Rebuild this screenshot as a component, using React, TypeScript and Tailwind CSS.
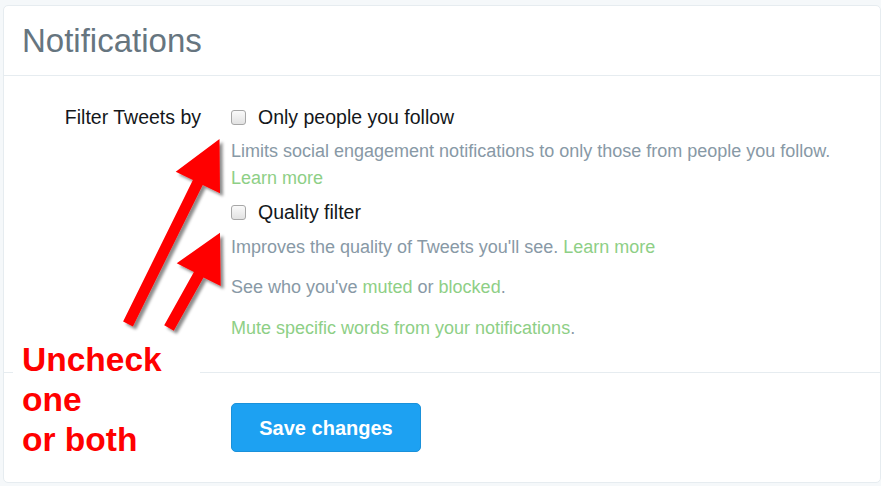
import React from "react";

const font = { fontFamily: '"Liberation Sans", Arial, sans-serif' };

function Checkbox() {
  return (
    <span className="inline-block w-[15px] h-[15px] rounded-[3px] border border-[#a7a7a7] bg-gradient-to-b from-[#fafafa] to-[#e2e2e2] shrink-0" />
  );
}

export default function App() {
  return (
    <div
      className="relative w-[881px] h-[486px] bg-[#f5f8fa] overflow-hidden pt-[5px] pl-[3px]"
      style={font}
    >
      <div className="w-[878px] h-[478px] bg-white border border-[#e6ecf0] rounded-[5px] flex flex-col">
        <div className="h-[70px] border-b border-[#e6ecf0] flex items-center pl-[18px]">
          <h1 className="text-[33px] leading-none text-[#66757f] font-normal">Notifications</h1>
        </div>
        <div className="flex pt-[29px] pb-[30px] border-b border-[#e6ecf0]">
          <div className="w-[197px] text-right text-[19.5px] leading-[24px] text-[#14171a]">
            Filter Tweets by
          </div>
          <div className="ml-[30px] flex flex-col">
            <label className="flex items-center gap-[12px] text-[19.5px] leading-[24px] text-[#14171a]">
              <Checkbox />
              <span>Only people you follow</span>
            </label>
            <p className="mt-[9px] text-[18px] leading-[27px] text-[#8899a6]">
              Limits social engagement notifications to only those from people you follow.
              <br />
              <span className="text-[#8ecf86]">Learn more</span>
            </p>
            <label className="mt-[8px] flex items-center gap-[12px] text-[19.5px] leading-[24px] text-[#14171a]">
              <Checkbox />
              <span>Quality filter</span>
            </label>
            <p className="mt-[10px] text-[18px] leading-[27px] text-[#8899a6]">
              Improves the quality of Tweets you'll see.{" "}
              <span className="text-[#8ecf86]">Learn more</span>
            </p>
            <p className="mt-[13px] text-[18px] leading-[27px] text-[#8899a6]">
              See who you've <span className="text-[#8ecf86]">muted</span> or{" "}
              <span className="text-[#8ecf86]">blocked</span>.
            </p>
            <p className="mt-[14px] text-[18px] leading-[27px] text-[#8899a6]">
              <span className="text-[#8ecf86]">Mute specific words from your notifications</span>.
            </p>
          </div>
        </div>
        <div className="flex-1 pl-[227px] pt-[30px]">
          <button className="w-[190px] h-[49px] rounded-[5px] bg-[#1da1f2] border border-[#1a91da] text-white font-bold text-[20px]">
            Save changes
          </button>
        </div>
      </div>

      <div className="absolute left-[13px] top-[339px] w-[187px] bg-white pl-[9px] pt-[1px] text-[33.5px] leading-[40px] font-bold text-[#ff0000]">
        Uncheck
        <br />
        one
        <br />
        or both
      </div>

      <svg className="absolute left-0 top-0" width="881" height="486" viewBox="0 0 881 486">
        <defs>
          <filter id="sh" x="-20%" y="-20%" width="140%" height="140%">
            <feDropShadow dx="3" dy="3" stdDeviation="1.8" floodColor="#000" floodOpacity="0.45" />
          </filter>
        </defs>
        <polygon
          filter="url(#sh)"
          fill="#ff0000"
          points="123.1,321.6 192.9,180.1 175.7,171.7 219.5,139 220,193.3 202.7,184.9 132.9,326.4"
        />
        <polygon
          filter="url(#sh)"
          fill="#ff0000"
          points="164.2,325.3 193.9,272 176.7,263.3 220,232.7 220.7,286 203.5,277.4 173.8,330.7"
        />
      </svg>
    </div>
  );
}
